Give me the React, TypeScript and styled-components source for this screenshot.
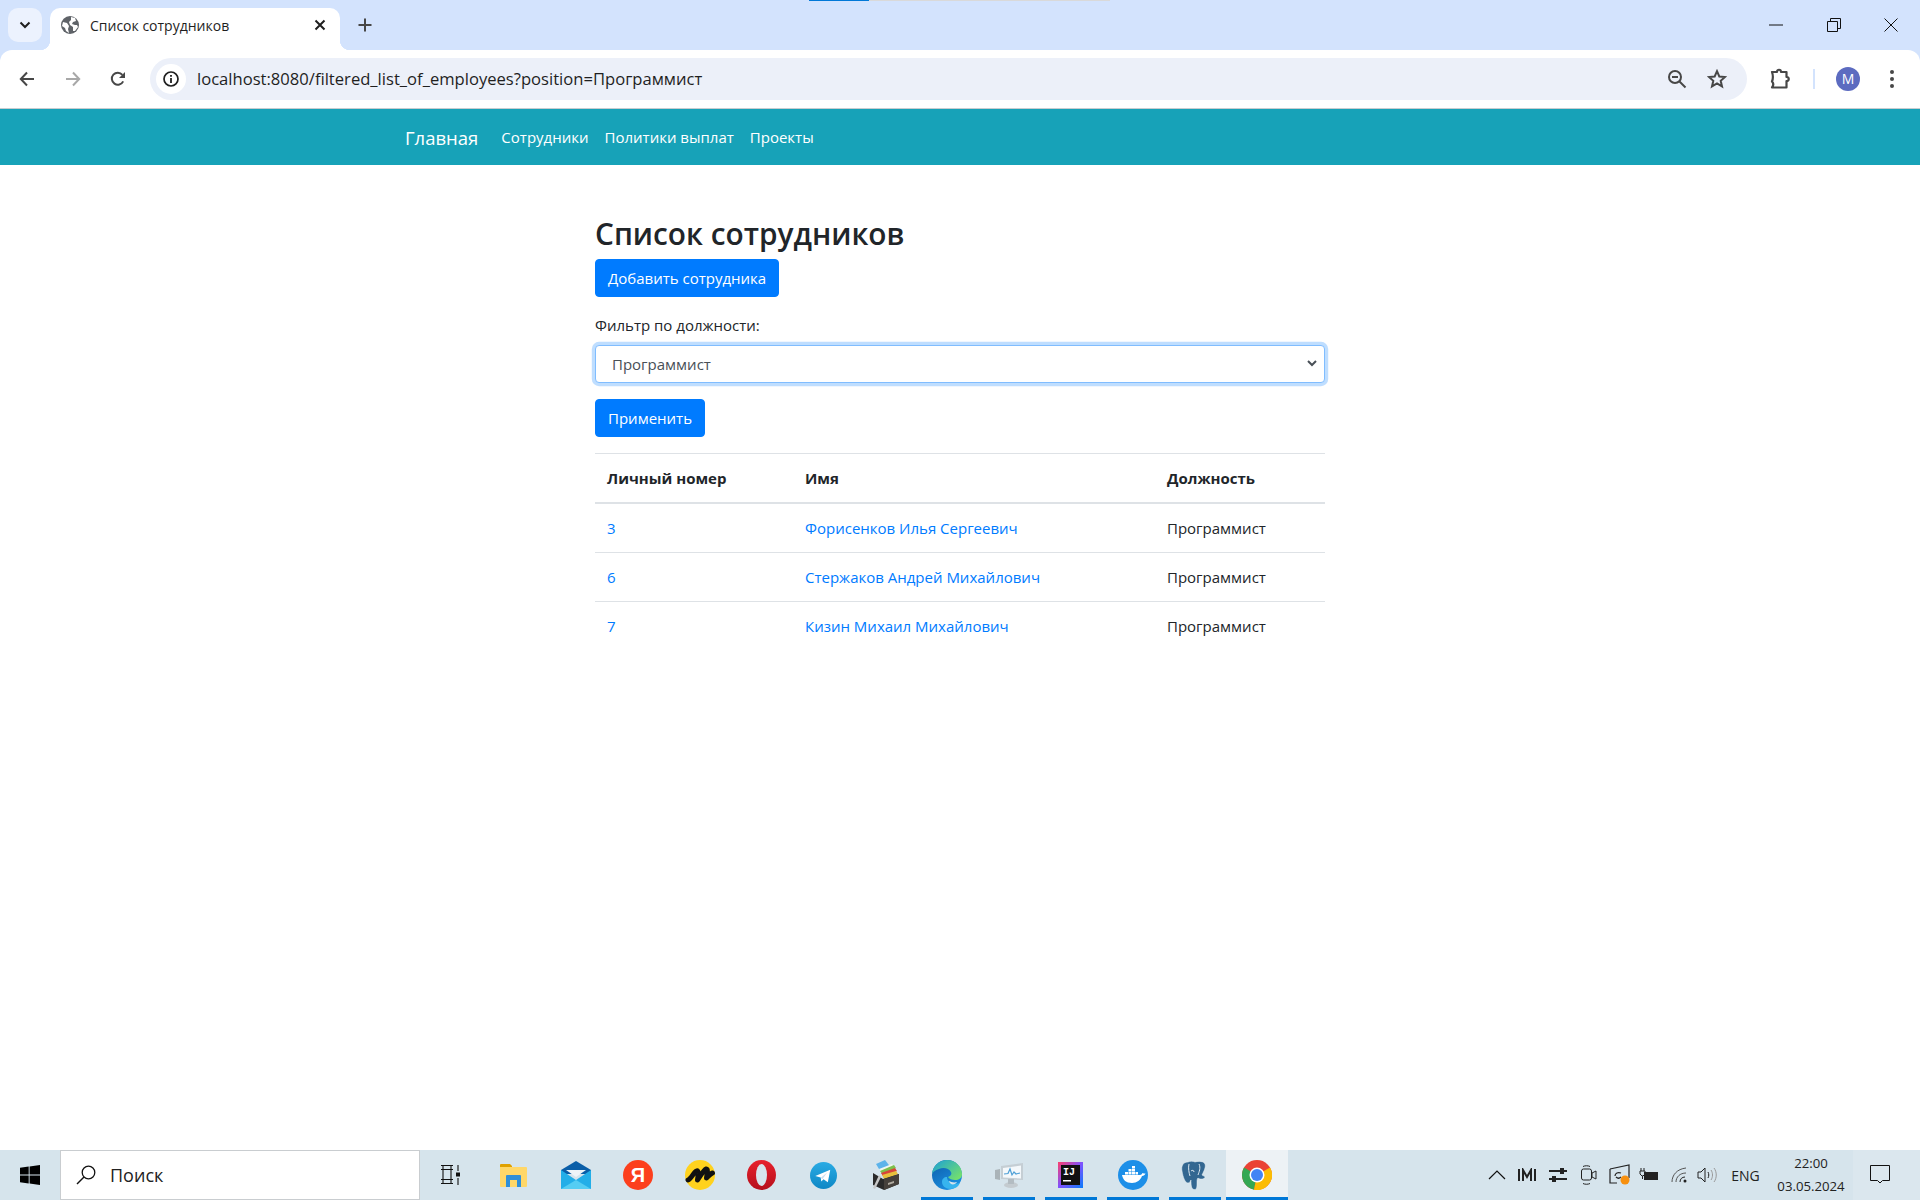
import { FC, ReactNode } from "react";
import styled, { createGlobalStyle } from "styled-components";

const GlobalStyle = createGlobalStyle`
html, body {
    margin: 0;
    padding: 0;
    background: #fff;
}
* {
    box-sizing: border-box;
}
`;

const uiFont = `"Open Sans", "Noto Sans", "Liberation Sans", sans-serif`;

const employees = [
    { id: 3, name: "Форисенков Илья Сергеевич", position: "Программист" },
    { id: 6, name: "Стержаков Андрей Михайлович", position: "Программист" },
    { id: 7, name: "Кизин Михаил Михайлович", position: "Программист" },
];

const GreyGlobe = () => (
    <svg width="18" height="18" viewBox="0 0 18 18">
        <circle cx="9" cy="9" r="9" fill="#5f6368" />
        <path d="M2 6l4 1 2 3-1 3 1 4-3-2-1-3-3-2zM10 1l4 1 1 3-3 1-1 2 3 1 2 0 1 2-3 4-2 0 0-4-3-2-1-3 2-2z" fill="#fff" />
    </svg>
);

const ChevronDown = () => (
    <svg width="12" height="8" viewBox="0 0 12 8">
        <path d="M1.5 1.5L6 6l4.5-4.5" fill="none" stroke="#1f1f1f" strokeWidth="2" />
    </svg>
);

const CloseTab = () => (
    <svg width="12" height="12" viewBox="0 0 12 12">
        <path d="M1.5 1.5l9 9M10.5 1.5l-9 9" stroke="#1f1f1f" strokeWidth="2" />
    </svg>
);

const Plus = () => (
    <svg width="14" height="14" viewBox="0 0 14 14">
        <path d="M7 .5v13M.5 7h13" stroke="#474747" strokeWidth="2" />
    </svg>
);

const ArrowIcon: FC<{ flip?: boolean; color: string }> = ({ flip, color }) => (
    <svg width="16" height="16" viewBox="0 0 16 16" style={flip ? { transform: "scaleX(-1)" } : undefined}>
        <path d="M15 8H2M8 1.5L1.8 8 8 14.5" fill="none" stroke={color} strokeWidth="2" />
    </svg>
);

const Reload = () => (
    <svg width="16" height="16" viewBox="0 0 16 16">
        <path d="M13.2 10.4A6 6 0 1 1 12.4 3.8" fill="none" stroke="#474747" strokeWidth="2" />
        <path d="M15 1v6H9z" fill="#474747" />
    </svg>
);

const InfoIcon = () => (
    <svg width="16" height="16" viewBox="0 0 16 16">
        <circle cx="8" cy="8" r="7" fill="none" stroke="#1f1f1f" strokeWidth="1.7" />
        <path d="M8 7v5M8 4v1.8" stroke="#1f1f1f" strokeWidth="1.8" />
    </svg>
);

const ZoomOut = () => (
    <svg width="20" height="20" viewBox="0 0 20 20">
        <circle cx="8" cy="8" r="6" fill="none" stroke="#474747" strokeWidth="2" />
        <path d="M12.5 12.5l6 6" stroke="#474747" strokeWidth="2" />
        <path d="M5 8h6" stroke="#474747" strokeWidth="2" />
    </svg>
);

const Star = () => (
    <svg width="20" height="20" viewBox="0 0 20 20">
        <path d="M10 2.2l2.3 5.3 5.7.5-4.3 3.8 1.3 5.6-5-3-5 3 1.3-5.6L2 8l5.7-.5z" fill="none" stroke="#474747" strokeWidth="2" strokeLinejoin="miter" />
    </svg>
);

const Puzzle = () => (
    <svg width="22" height="22" viewBox="0 0 22 22">
        <path d="M3 4h5c0-3 4-3 4 0h5.500v5c3 0 3 4 0 4v6.500H3c1.500-2 1.500-4.500 0-6 1.200-3 1.200-6 0-9.500z" fill="none" stroke="#474747" strokeWidth="2.200" strokeLinejoin="round" />
    </svg>
);

const Dots = () => (
    <svg width="6" height="20" viewBox="0 0 6 20">
        <circle cx="3" cy="3" r="2" fill="#474747" />
        <circle cx="3" cy="10" r="2" fill="#474747" />
        <circle cx="3" cy="17" r="2" fill="#474747" />
    </svg>
);

const MinimizeIcon = () => (
    <svg width="14" height="2" viewBox="0 0 14 2">
        <path d="M0 1h14" stroke="#111" strokeWidth="1" />
    </svg>
);

const RestoreIcon = () => (
    <svg width="14" height="14" viewBox="0 0 14 14">
        <path d="M.5 3.500h10v10H.500zM3.500 3.500V.500h10v10h-3" fill="none" stroke="#111" strokeWidth="1" />
    </svg>
);

const CloseWindowIcon = () => (
    <svg width="14" height="14" viewBox="0 0 14 14">
        <path d="M.5.5l13 13M13.500.5l-13 13" stroke="#111" strokeWidth="1" />
    </svg>
);

const SelectChevron = () => (
    <svg width="10" height="7" viewBox="0 0 10 7">
        <path d="M1 1l4 4 4-4" fill="none" stroke="#495057" strokeWidth="2" />
    </svg>
);

const WindowsLogo = () => (
    <svg width="20" height="20" viewBox="0 0 20 20">
        <path d="M0 2.800l8.700-1.300v8H0zM9.600 1.400L20 0v9.500H9.600zM0 10.500h8.700v8L0 17.200zM9.600 10.500H20V20L9.600 18.600z" fill="#000" />
    </svg>
);

const SearchGlass = () => (
    <svg width="20" height="20" viewBox="0 0 20 20">
        <circle cx="12.500" cy="7.500" r="6.300" fill="none" stroke="#111" strokeWidth="1.300" />
        <path d="M8 12L1 19" stroke="#111" strokeWidth="1.500" />
    </svg>
);

const TaskView = () => (
    <svg width="20" height="20" viewBox="0 0 20 20">
        <path d="M1 .5h12M3 .5v4M11 .5v4M1 4.500h12M3 4.500h8v10H3zM1 14.500h12M1 18.500h12M3 14.500v4M11 14.500v4" fill="none" stroke="#111" strokeWidth="1.100" />
        <path d="M18 0v6M18 13v7" stroke="#111" strokeWidth="1.100" />
        <rect x="16" y="7.500" width="4" height="4" fill="#111" />
    </svg>
);

const Explorer = () => (
    <svg width="27" height="23" viewBox="0 0 27 23">
        <path d="M0 1a1 1 0 0 1 1-1h9l2 2v3H0z" fill="#e0a100" />
        <path d="M0 3h26a1 1 0 0 1 1 1v18a1 1 0 0 1-1 1H1a1 1 0 0 1-1-1z" fill="#ffd768" />
        <path d="M6 12a1 1 0 0 1 1-1h13a1 1 0 0 1 1 1v11h-4v-7h-7v7H6z" fill="#2f8fd8" />
    </svg>
);

const MailIcon = () => (
    <svg width="30" height="28" viewBox="0 0 30 28">
        <path d="M0 9L15 0l15 9v4H0z" fill="#0a5ea8" />
        <path d="M5 9h20l-10 7z" fill="#eef4f8" />
        <path d="M0 9l15 10L30 9v19H0z" fill="#23aee8" />
        <path d="M0 28l15-9 15 9z" fill="#55cdf3" />
    </svg>
);

const YandexIcon = () => (
    <svg width="30" height="30" viewBox="0 0 30 30">
        <circle cx="15" cy="15" r="15" fill="#fc3f1d" />
        <text x="15" y="22" textAnchor="middle" fontSize="20" fontWeight="700" fontFamily="Liberation Sans, sans-serif" fill="#fff">Я</text>
    </svg>
);

const MarketIcon = () => (
    <svg width="30" height="30" viewBox="0 0 30 30">
        <circle cx="15" cy="15" r="15" fill="#ffd21e" />
        <path d="M3 20C6 19 9 12 11.500 11c2-1 2 3 1 9 3-4 6-10 8.500-11 2-.5 1.500 3 .500 9 2-2 4-4.500 6-5" fill="none" stroke="#111" strokeWidth="5" strokeLinecap="round" strokeLinejoin="round" />
    </svg>
);

const OperaIcon = () => (
    <svg width="29" height="30" viewBox="0 0 29 30">
        <defs>
            <linearGradient id="opera" x1="0" y1="0" x2="0" y2="1">
                <stop offset="0" stopColor="#e8202c" />
                <stop offset="1" stopColor="#b5101c" />
            </linearGradient>
        </defs>
        <ellipse cx="14.500" cy="15" rx="14.500" ry="15" fill="url(#opera)" />
        <ellipse cx="14.500" cy="15" rx="5.500" ry="11" fill="#d6e4ec" />
    </svg>
);

const TelegramIcon = () => (
    <svg width="27" height="27" viewBox="0 0 28 28">
        <defs>
            <linearGradient id="tg" x1="0" y1="0" x2="0" y2="1">
                <stop offset="0" stopColor="#2aabe4" />
                <stop offset="1" stopColor="#0f87c5" />
            </linearGradient>
        </defs>
        <circle cx="14" cy="14" r="14" fill="url(#tg)" />
        <path d="M5.500 14.500L21 8l-2.500 13-4.500-3.200-2.300 2.400-.6-4z" fill="#fff" />
        <path d="M11 16.500l7-6-5 7z" fill="#c9def0" />
    </svg>
);

const ArchiveIcon = () => (
    <svg width="28" height="30" viewBox="0 0 28 30">
        <path d="M5 4l9-4 7 9-10 5z" fill="#5db3ea" />
        <path d="M8 9l13-5 2 3-13 6z" fill="#f0f5f0" />
        <path d="M9 11l14-6 2 3-13 7z" fill="#7dc04b" />
        <path d="M10 13l14-5 2 3-13 7z" fill="#d8443a" />
        <path d="M11 15l14-4 2 3-13 6z" fill="#e7c13d" />
        <path d="M2 13l10 6 16-5v10l-15 6-11-5z" fill="#2a2a2a" />
        <path d="M13 19v11l15-6V14z" fill="#45403b" />
        <path d="M17 23l6-2v2l-6 2z" fill="#b0aaa0" />
        <path d="M8 15L2 28l2 1 6-12z" fill="#c8c8c8" />
    </svg>
);

const EdgeIcon = () => (
    <svg width="30" height="30" viewBox="0 0 30 30">
        <defs>
            <linearGradient id="edgeA" x1="0" y1="0" x2="1" y2=".8">
                <stop offset="0" stopColor="#1a9fd8" />
                <stop offset="1" stopColor="#74e06c" />
            </linearGradient>
            <linearGradient id="edgeB" x1="0" y1="0" x2=".6" y2="1">
                <stop offset="0" stopColor="#0b5ba8" />
                <stop offset="1" stopColor="#1c8fe0" />
            </linearGradient>
        </defs>
        <circle cx="15" cy="15" r="15" fill="url(#edgeB)" />
        <path d="M0 14C1 5 8 0 15 0c9 0 15 7 15 14 0 4-3 6-7 6-3 0-6-1-7-3 3-1 4-3 3-5-2-4-8-5-12-3-4 1-6 3-7 5z" fill="url(#edgeA)" />
        <path d="M15 17c-3 0-5 2-5 5 0 4 4 7 8 7 3 0 5-1 7-2 1-1 2-2 3-4-3 1-7 1-10-1-2-1-3-3-3-5z" fill="#37b4ee" />
        <path d="M17 21c2 1 5 2 8 1-1 2-4 3-6 2-1-1-2-2-2-3z" fill="#d6e4ec" />
    </svg>
);

const MonitorIcon = () => (
    <svg width="28" height="25" viewBox="0 0 28 25">
        <path d="M6 3l22-3v17L6 16z" fill="#c5ced4" />
        <path d="M8 5l18-2.500v13L8 14.500z" fill="#f4f8fb" />
        <path d="M9 11l4-.5 2-4.500 2 6 2-3 2 2 4-1" fill="none" stroke="#4d9fd6" strokeWidth="1.200" />
        <path d="M0 7l5-1v11l-5-1z" fill="#aab3b8" />
        <ellipse cx="16" cy="22" rx="7" ry="3" fill="#c4cbd0" />
        <path d="M13 16h6v5h-6z" fill="#b3bcc2" />
    </svg>
);

const IdeaIcon = () => (
    <svg width="25" height="26" viewBox="0 0 25 26">
        <defs>
            <linearGradient id="ij" x1="0" y1="0" x2="1" y2="1">
                <stop offset="0" stopColor="#fd3f6b" />
                <stop offset=".5" stopColor="#7f52ff" />
                <stop offset="1" stopColor="#087cfa" />
            </linearGradient>
        </defs>
        <rect width="25" height="26" fill="url(#ij)" />
        <rect x="3" y="3" width="19" height="20" fill="#111" />
        <text x="5" y="13" fontSize="10" fontWeight="700" fontFamily="Liberation Mono, monospace" fill="#fff">IJ</text>
        <rect x="5" y="18" width="8" height="1.500" fill="#fff" />
    </svg>
);

const DockerIcon = () => (
    <svg width="30" height="30" viewBox="0 0 30 30">
        <circle cx="15" cy="15" r="15" fill="#1d8fe8" />
        <path d="M4 15h18c1 0 2-1 2.500-2 1 .5 2 .5 3 .5-.5 1.500-2 2.500-3.500 2.500-1.500 4-5 7-10 7-6 0-9-3-10-8z" fill="#fff" />
        <path d="M7 12h3v2.500H7zM10.500 12h3v2.500h-3zM14 12h3v2.500h-3zM17.500 12h2.500v2.500h-2.500zM10.500 9h3v2.500h-3zM14 9h3v2.500h-3zM14 6h3v2.500h-3z" fill="#fff" />
    </svg>
);

const PostgresIcon = () => (
    <svg width="27" height="29" viewBox="0 0 27 29">
        <path d="M7 1C2 1 0 5 1 10c1 6 3 12 6 12 2 0 2-2 3-3 0 4 0 9 3 9.500 3 .5 3-3 3-6.500 0-3 0-4 1-5 2 2 7 1 7-1 0-1-2-1-3-2 2-4 4-8 3-11-1-3-7-3-10-2-2-1-5-1-7 0z" fill="#336791" stroke="#e8f0f5" strokeWidth=".5" />
        <path d="M8 3c-1 4 0 9 1 12M18 3c2 4 0 8-1 11M10 10c1-1 3-1 3 1" fill="none" stroke="#dce8f0" strokeWidth="1" />
    </svg>
);

const ChromeIcon = () => (
    <svg width="30" height="30" viewBox="0 0 30 30">
        <circle cx="15" cy="15" r="15" fill="#ea4335" />
        <path d="M15 15L2 7.500A15 15 0 0 0 12 29.700z" fill="#34a853" />
        <path d="M15 15L28 7.500A15 15 0 0 1 12 29.700z" fill="#fbbc04" />
        <circle cx="15" cy="15" r="7.500" fill="#fff" />
        <circle cx="15" cy="15" r="6" fill="#4285f4" />
    </svg>
);

const TrayCaret = () => (
    <svg width="18" height="10" viewBox="0 0 18 10">
        <path d="M1 9l8-8 8 8" fill="none" stroke="#111" strokeWidth="1.200" />
    </svg>
);

const TrayMeter = () => (
    <svg width="18" height="14" viewBox="0 0 18 14">
        <path d="M1 1v12M5 13V2l4 7 4-7v11M17 1v12" fill="none" stroke="#222" strokeWidth="2" />
    </svg>
);

const TraySwitch = () => (
    <svg width="18" height="14" viewBox="0 0 18 14">
        <path d="M0 3h11M15 3h3M0 11h3M7 11h11" stroke="#222" strokeWidth="2" />
        <rect x="11" y="0" width="4" height="6" fill="#222" />
        <rect x="3" y="8" width="4" height="6" fill="#222" />
    </svg>
);

const TrayVideo = () => (
    <svg width="16" height="20" viewBox="0 0 16 20">
        <rect x=".5" y="4" width="10" height="11" rx="2" fill="none" stroke="#222" strokeWidth="1" />
        <path d="M11 8l4-2v8l-4-2z" fill="none" stroke="#222" strokeWidth="1" />
        <path d="M2 1.500c2-1 5-1 7 0M2 18.500c2 1 5 1 7 0" fill="none" stroke="#222" strokeWidth="1" />
    </svg>
);

const TrayScreen = () => (
    <svg width="22" height="22" viewBox="0 0 22 22">
        <path d="M1 5l19-4v13M1 5v14h7" fill="none" stroke="#222" strokeWidth="1.200" />
        <path d="M6 12c0-3 3-4 6-3M12 13c-2 2-4 1-5 0" fill="none" stroke="#222" strokeWidth="1.200" />
        <circle cx="16" cy="16" r="4.500" fill="#f7900f" />
    </svg>
);

const TrayBattery = () => (
    <svg width="20" height="14" viewBox="0 0 20 14">
        <path d="M2 0v3M5 0v3M1 3h5v3l-2 2H3L1 6zM3.500 8v3" fill="none" stroke="#222" strokeWidth="1" />
        <rect x="5" y="4" width="14" height="8" fill="#222" />
    </svg>
);

const TrayWifi = () => (
    <svg width="16" height="16" viewBox="0 0 16 16">
        <path d="M1 15C1 8 6 2 15 1M5 15c0-5 4-9 10-9" fill="none" stroke="#555" strokeWidth="1" />
        <path d="M9 15c0-3 2-5 5-5" fill="none" stroke="#222" strokeWidth="1" />
        <circle cx="14" cy="14" r="1.500" fill="#222" />
    </svg>
);

const TrayVolume = () => (
    <svg width="22" height="18" viewBox="0 0 22 18">
        <path d="M1 6h3l4-4v14l-4-4H1z" fill="none" stroke="#222" strokeWidth="1" />
        <path d="M11 6c1 2 1 4 0 6" fill="none" stroke="#222" strokeWidth="1" />
        <path d="M14 4c2 3 2 7 0 10M17 2c3 4 3 10 0 14" fill="none" stroke="#999" strokeWidth="1" />
    </svg>
);

const NotificationIcon = () => (
    <svg width="20" height="20" viewBox="0 0 20 20">
        <path d="M.5.5h19v15h-7l-2.500 2.500L7.500 15.500h-7z" fill="none" stroke="#111" strokeWidth="1" />
    </svg>
);

const apps: { key: string; icon: ReactNode; running?: boolean; active?: boolean }[] = [
    { key: "explorer", icon: <Explorer /> },
    { key: "mail", icon: <MailIcon /> },
    { key: "yandex", icon: <YandexIcon /> },
    { key: "market", icon: <MarketIcon /> },
    { key: "opera", icon: <OperaIcon /> },
    { key: "telegram", icon: <TelegramIcon /> },
    { key: "archive", icon: <ArchiveIcon /> },
    { key: "edge", icon: <EdgeIcon />, running: true },
    { key: "monitor", icon: <MonitorIcon />, running: true },
    { key: "idea", icon: <IdeaIcon />, running: true },
    { key: "docker", icon: <DockerIcon />, running: true },
    { key: "postgres", icon: <PostgresIcon />, running: true },
    { key: "chrome", icon: <ChromeIcon />, running: true, active: true },
];

const trayIcons = [
    { key: "meter", icon: <TrayMeter />, width: 31 },
    { key: "switch", icon: <TraySwitch />, width: 31 },
    { key: "video", icon: <TrayVideo />, width: 31 },
    { key: "screen", icon: <TrayScreen />, width: 30 },
    { key: "battery", icon: <TrayBattery />, width: 29 },
    { key: "wifi", icon: <TrayWifi />, width: 30 },
    { key: "volume", icon: <TrayVolume />, width: 29 },
];

export default function App() {
    return (
        <>
            <GlobalStyle />
            <Screen>
                <ShareBar>
                    <ShareDone />
                    <ShareRest />
                </ShareBar>
                <TabStrip>
                    <TabSearch><ChevronDown /></TabSearch>
                    <Tab>
                        <GreyGlobe />
                        <TabTitle>Список сотрудников</TabTitle>
                        <CloseTab />
                    </Tab>
                    <NewTab><Plus /></NewTab>
                    <WindowControls>
                        <WindowButton><MinimizeIcon /></WindowButton>
                        <WindowButton><RestoreIcon /></WindowButton>
                        <WindowButton><CloseWindowIcon /></WindowButton>
                    </WindowControls>
                </TabStrip>
                <Toolbar>
                    <ToolButton><ArrowIcon color="#474747" /></ToolButton>
                    <ToolButton><ArrowIcon flip color="#a8a8a8" /></ToolButton>
                    <ToolButton><Reload /></ToolButton>
                    <Omnibox>
                        <InfoChip><InfoIcon /></InfoChip>
                        <AddressText>localhost:8080/filtered_list_of_employees?position=Программист</AddressText>
                        <OmniIcon><ZoomOut /></OmniIcon>
                        <OmniIcon><Star /></OmniIcon>
                    </Omnibox>
                    <ExtensionSlot><Puzzle /></ExtensionSlot>
                    <ToolDivider />
                    <Avatar>M</Avatar>
                    <MenuSlot><Dots /></MenuSlot>
                </Toolbar>
                <Navbar>
                    <NavContainer>
                        <Brand href="#">Главная</Brand>
                        <NavLink href="#">Сотрудники</NavLink>
                        <NavLink href="#">Политики выплат</NavLink>
                        <NavLink href="#">Проекты</NavLink>
                    </NavContainer>
                </Navbar>
                <Main>
                    <Column>
                        <Heading>Список сотрудников</Heading>
                        <PrimaryButton>Добавить сотрудника</PrimaryButton>
                        <FilterLabel>Фильтр по должности:</FilterLabel>
                        <SelectWrap>
                            <FilterSelect defaultValue="Программист">
                                <option>Программист</option>
                            </FilterSelect>
                            <SelectArrow><SelectChevron /></SelectArrow>
                        </SelectWrap>
                        <PrimaryButton>Применить</PrimaryButton>
                        <EmployeeTable>
                            <colgroup>
                                <col width="198" />
                                <col width="362" />
                                <col width="170" />
                            </colgroup>
                            <thead>
                                <tr>
                                    <HeadCell>Личный номер</HeadCell>
                                    <HeadCell>Имя</HeadCell>
                                    <HeadCell>Должность</HeadCell>
                                </tr>
                            </thead>
                            <tbody>
                                {employees.map(e => (
                                    <tr key={e.id}>
                                        <BodyCell><RowLink href="#">{e.id}</RowLink></BodyCell>
                                        <BodyCell><RowLink href="#">{e.name}</RowLink></BodyCell>
                                        <BodyCell>{e.position}</BodyCell>
                                    </tr>
                                ))}
                            </tbody>
                        </EmployeeTable>
                    </Column>
                </Main>
                <Taskbar>
                    <StartButton><WindowsLogo /></StartButton>
                    <SearchBox>
                        <SearchGlass />
                        <SearchText>Поиск</SearchText>
                    </SearchBox>
                    <TaskViewSlot><TaskView /></TaskViewSlot>
                    {apps.map(app => (
                        <AppSlot key={app.key} $running={app.running} $active={app.active}>
                            {app.icon}
                        </AppSlot>
                    ))}
                    <Tray>
                        <TraySlot $width={29}><TrayCaret /></TraySlot>
                        {trayIcons.map(t => (
                            <TraySlot key={t.key} $width={t.width}>{t.icon}</TraySlot>
                        ))}
                        <LangLabel>ENG</LangLabel>
                        <Clock>
                            <span>22:00</span>
                            <span>03.05.2024</span>
                        </Clock>
                        <NotifySlot><NotificationIcon /></NotifySlot>
                    </Tray>
                </Taskbar>
            </Screen>
        </>
    );
}

const Screen = styled.div`
position: relative;
width: 1920px;
height: 1200px;
display: flex;
flex-direction: column;
overflow: hidden;
font-family: ${uiFont};
background: #d3e3fd;
`
const ShareBar = styled.div`
position: absolute;
top: 0;
left: 809px;
display: flex;
height: 1px;
`
const ShareDone = styled.div`
width: 60px;
background: #0078d7;
`
const ShareRest = styled.div`
width: 241px;
background: #d9d9d9;
`
const TabStrip = styled.div`
height: 50px;
flex: none;
display: flex;
align-items: flex-end;
padding-left: 8px;
`
const TabSearch = styled.div`
width: 34px;
height: 34px;
margin-bottom: 8px;
border-radius: 10px;
background: #ecf2fe;
display: flex;
align-items: center;
justify-content: center;
`
const Tab = styled.div`
position: relative;
width: 290px;
height: 42px;
margin-left: 8px;
padding: 0 14px 8px 11px;
display: flex;
align-items: center;
background: #fff;
border-radius: 10px 10px 0 0;
&::before, &::after {
    content: "";
    position: absolute;
    bottom: 0;
    width: 10px;
    height: 10px;
}
&::before {
    left: -10px;
    background: radial-gradient(circle at 0 0, transparent 10px, #fff 10.5px);
}
&::after {
    right: -10px;
    background: radial-gradient(circle at 100% 0, transparent 10px, #fff 10.5px);
}
`
const TabTitle = styled.span`
flex: 1;
margin-left: 11px;
font-size: 14px;
color: #1f1f1f;
white-space: nowrap;
`
const NewTab = styled.div`
width: 36px;
height: 36px;
margin: 0 0 7px 7px;
display: flex;
align-items: center;
justify-content: center;
`
const WindowControls = styled.div`
margin-left: auto;
height: 50px;
display: flex;
align-items: center;
`
const WindowButton = styled.div`
width: 57.5px;
height: 50px;
display: flex;
align-items: center;
justify-content: center;
`
const Toolbar = styled.div`
height: 59px;
flex: none;
display: flex;
align-items: center;
padding: 0 6px 1px 5px;
background: #fff;
border-radius: 12px 12px 0 0;
border-bottom: 1px solid #c7cdd0;
`
const ToolButton = styled.div`
width: 44px;
height: 36px;
margin-right: 1.5px;
display: flex;
align-items: center;
justify-content: center;
`
const Omnibox = styled.div`
flex: 1;
height: 42px;
margin-left: 8.5px;
padding: 0 10px 0 6px;
display: flex;
align-items: center;
background: #ecf0f9;
border-radius: 21px;
`
const InfoChip = styled.div`
width: 30px;
height: 30px;
border-radius: 50%;
background: #fff;
display: flex;
align-items: center;
justify-content: center;
`
const AddressText = styled.span`
flex: 1;
margin-left: 11px;
font-size: 16.6px;
color: #1f1f1f;
white-space: nowrap;
`
const OmniIcon = styled.div`
width: 40px;
display: flex;
justify-content: center;
`
const ExtensionSlot = styled.div`
width: 66px;
display: flex;
justify-content: center;
`
const ToolDivider = styled.div`
width: 2px;
height: 20px;
background: #d3e3fd;
`
const Avatar = styled.div`
width: 24px;
height: 24px;
margin-left: 21px;
border-radius: 50%;
background: #5c6bc0;
color: #fff;
font-size: 14px;
display: flex;
align-items: center;
justify-content: center;
`
const MenuSlot = styled.div`
width: 44px;
margin-left: 10px;
display: flex;
justify-content: center;
`
const Navbar = styled.nav`
height: 56px;
flex: none;
background: #17a2b8;
`
const NavContainer = styled.div`
width: 1140px;
height: 100%;
margin: 0 auto;
padding: 0 15px;
display: flex;
align-items: center;
`
const Brand = styled.a`
margin-right: 15px;
font-size: 18.5px;
color: #fff;
text-decoration: none;
`
const NavLink = styled.a`
padding: 8px;
font-size: 15px;
color: #fff;
text-decoration: none;
`
const Main = styled.main`
flex: 1;
background: #fff;
padding-top: 48px;
color: #212529;
font-size: 15px;
line-height: 24px;
`
const Column = styled.div`
width: 730px;
margin: 0 auto;
display: flex;
flex-direction: column;
align-items: flex-start;
`
const Heading = styled.h2`
margin: 0 0 6px;
padding-top: 2px;
font-size: 29.8px;
font-weight: 600;
line-height: 38.4px;
`
const PrimaryButton = styled.button`
height: 38px;
padding: 6px 12px;
font: inherit;
color: #fff;
background: #007bff;
border: 1px solid #007bff;
border-radius: 4px;
`
const FilterLabel = styled.label`
margin: 16px 0 8px;
display: block;
`
const SelectWrap = styled.div`
position: relative;
width: 100%;
margin-bottom: 16px;
`
const FilterSelect = styled.select`
display: block;
width: 100%;
height: 38px;
padding: 6px 12px 6px 16px;
font: inherit;
color: #495057;
background: #fff;
border: 1px solid #80bdff;
border-radius: 4px;
outline: 0;
appearance: none;
box-shadow: 0 0 0 3.2px rgba(0, 123, 255, .25);
`
const SelectArrow = styled.span`
position: absolute;
top: 15px;
right: 8px;
display: flex;
pointer-events: none;
`
const EmployeeTable = styled.table`
width: 100%;
margin-top: 16px;
border-collapse: collapse;
table-layout: fixed;
`
const HeadCell = styled.th`
padding: 12px;
text-align: left;
font-weight: 700;
border-top: 1px solid #dee2e6;
border-bottom: 2px solid #dee2e6;
`
const BodyCell = styled.td`
padding: 12px;
border-top: 1px solid #dee2e6;
`
const RowLink = styled.a`
color: #007bff;
text-decoration: none;
`
const Taskbar = styled.footer`
height: 50px;
flex: none;
display: flex;
align-items: stretch;
background: #d6e4ec;
`
const StartButton = styled.div`
width: 60px;
display: flex;
align-items: center;
justify-content: center;
`
const SearchBox = styled.div`
width: 360px;
padding-left: 15px;
display: flex;
align-items: center;
background: #fff;
border: 1px solid #c9cdd0;
`
const SearchText = styled.span`
margin-left: 14px;
font-size: 18px;
color: #222;
`
const TaskViewSlot = styled.div`
width: 60px;
margin-right: 3px;
display: flex;
align-items: center;
justify-content: center;
`
const AppSlot = styled.div<{ $running?: boolean; $active?: boolean }>`
position: relative;
width: 61.9px;
display: flex;
align-items: center;
justify-content: center;
background: ${p => (p.$active ? "#edf2f5" : "transparent")};
&::after {
    content: "";
    display: ${p => (p.$running ? "block" : "none")};
    position: absolute;
    left: ${p => (p.$active ? "0" : "5px")};
    right: ${p => (p.$active ? "0" : "5px")};
    bottom: 0;
    height: 3px;
    background: #0078d7;
}
`
const Tray = styled.div`
margin-left: auto;
display: flex;
align-items: center;
color: #222;
`
const TraySlot = styled.div<{ $width: number }>`
width: ${p => p.$width}px;
display: flex;
justify-content: center;
`
const LangLabel = styled.span`
width: 46px;
text-align: center;
font-size: 14px;
`
const Clock = styled.div`
width: 84px;
margin-left: .5px;
display: flex;
flex-direction: column;
align-items: center;
font-size: 13.2px;
line-height: 23px;
`
const NotifySlot = styled.div`
width: 67px;
height: 100%;
display: flex;
align-items: center;
justify-content: center;
padding-right: 14px;
background: #dbe7ee;
`
